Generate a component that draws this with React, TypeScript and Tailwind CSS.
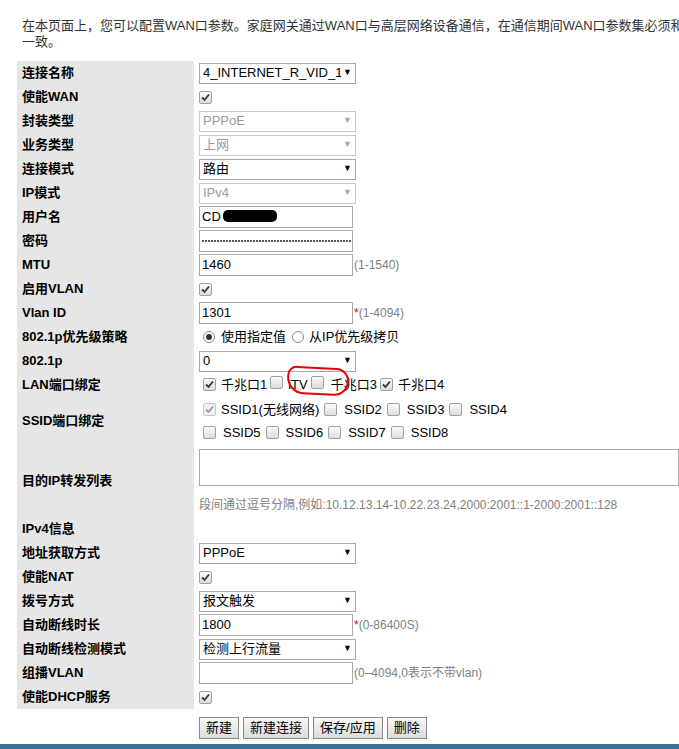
import React from "react";

const Chk = ({ on, dis }: { on?: boolean; dis?: boolean }) => (
  <span className={`inline-flex items-center justify-center w-[13px] h-[13px] border rounded-[2px] ${dis ? "border-[#c8c8c8] bg-[#f2f2f2]" : "border-[#a0a0a0] bg-gradient-to-b from-[#fafafa] to-[#dcdcdc]"}`}>
    {on && (
      <svg width="9" height="9" viewBox="0 0 9 9"><path d="M1 4.5 L3.5 7 L8 1.5" stroke={dis ? "#9a9a9a" : "#333"} strokeWidth="1.8" fill="none" /></svg>
    )}
  </span>
);

const Sel = ({ v, dis, w = "w-[157px]" }: { v: string; dis?: boolean; w?: string }) => (
  <div className={`${w} h-[21px] border ${dis ? "border-[#c8c8c8] text-[#9a9a9a]" : "border-[#a9a9a9] text-black"} bg-white flex items-center justify-between px-[3px] text-[13px] overflow-hidden whitespace-nowrap`}>
    <span className="overflow-hidden flex-1 min-w-0">{v}</span>
    <span className={`text-[9px] ml-[2px] ${dis ? "text-[#aaa]" : "text-black"}`}>▼</span>
  </div>
);

const Inp = ({ v, pw }: { v: string; pw?: boolean }) => (
  <div className="w-[154px] h-[22px] border border-[#a9a9a9] bg-white flex items-center px-[2px] text-[13px] overflow-hidden whitespace-nowrap">
    {pw ? (
      <span className="flex gap-[1px]">
        {Array.from({ length: 50 }).map((_, i) => (
          <span key={i} className="w-[2px] h-[2px] rounded-full bg-[#222]" />
        ))}
      </span>
    ) : v}
  </div>
);

const Hint = ({ t, star }: { t: string; star?: boolean }) => (
  <span className="text-[12px] text-[#808080] ml-[1px]">{star && <span className="text-red-600">*</span>}{t}</span>
);

type Row = { l: string; h?: number; c: React.ReactNode };

export default function App() {
  const rows: Row[] = [
    { l: "连接名称", c: <Sel v="4_INTERNET_R_VID_13" /> },
    { l: "使能WAN", c: <Chk on /> },
    { l: "封装类型", c: <Sel v="PPPoE" dis /> },
    { l: "业务类型", c: <Sel v="上网" dis /> },
    { l: "连接模式", c: <Sel v="路由" /> },
    { l: "IP模式", c: <Sel v="IPv4" dis /> },
    { l: "用户名", c: <div className="relative"><Inp v="CD" /><div className="absolute left-[24px] top-[4px] w-[54px] h-[12px] bg-black rounded-[5px]" /></div> },
    { l: "密码", c: <Inp v="" pw /> },
    { l: "MTU", c: <><Inp v="1460" /><Hint t="(1-1540)" /></> },
    { l: "启用VLAN", c: <Chk on /> },
    { l: "Vlan ID", c: <><Inp v="1301" /><Hint t="(1-4094)" star /></> },
    { l: "802.1p优先级策略", c: <span className="flex items-center gap-[3px] text-[13px]"><span className="w-[12px] h-[12px] rounded-full border border-[#888] bg-white flex items-center justify-center ml-[4px]"><span className="w-[6px] h-[6px] rounded-full bg-[#333]" /></span><span className="ml-[3px]">使用指定值</span><span className="w-[12px] h-[12px] rounded-full border border-[#888] bg-white ml-[3px]" /><span className="ml-[2px]">从IP优先级拷贝</span></span> },
    { l: "802.1p", c: <Sel v="0" /> },
    { l: "LAN端口绑定", c: (
      <span className="flex items-center text-[13px] relative">
        <span className="ml-[4px]"><Chk on /></span><span className="ml-[5px]">千兆口1</span>
        <span className="ml-[3px]"><Chk /></span><span className="ml-[5px]">iTV</span>
        <span className="ml-[3px]"><Chk /></span><span className="ml-[7px]">千兆口3</span>
        <span className="ml-[3px]"><Chk on /></span><span className="ml-[5px]">千兆口4</span>
        <span className="absolute left-[88px] top-[-8px] w-[62px] h-[28px] border-[2px] border-red-600 rounded-[10px_14px_16px_18px] rotate-[3deg]" />
      </span>
    ) },
    { l: "SSID端口绑定", h: 48, c: (
      <div className="flex flex-col text-[13px] gap-[4px]">
        <span className="flex items-center gap-[5px] ml-[4px]"><Chk on dis /><span>SSID1(无线网络)</span><Chk /><span className="ml-[2px]">SSID2</span><Chk /><span className="ml-[2px]">SSID3</span><Chk /><span className="ml-[2px]">SSID4</span></span>
        <span className="flex items-center gap-[5px] ml-[4px]"><Chk /><span className="ml-[2px]">SSID5</span><Chk /><span className="ml-[2px]">SSID6</span><Chk /><span className="ml-[2px]">SSID7</span><Chk /><span className="ml-[2px]">SSID8</span></span>
      </div>
    ) },
    { l: "目的IP转发列表", h: 72, c: (
      <div className="flex flex-col w-full">
        <div className="w-[480px] h-[37px] border border-[#a9a9a9] bg-white mt-[4px]" />
        <div className="text-[12px] text-[#808080] mt-[10px] whitespace-nowrap">段间通过逗号分隔,例如:10.12.13.14-10.22.23.24,2000:2001::1-2000:2001::128</div>
      </div>
    ) },
    { l: "IPv4信息", c: null },
    { l: "地址获取方式", c: <Sel v="PPPoE" /> },
    { l: "使能NAT", c: <Chk on /> },
    { l: "拨号方式", c: <Sel v="报文触发" /> },
    { l: "自动断线时长", c: <><Inp v="1800" /><Hint t="(0-86400S)" star /></> },
    { l: "自动断线检测模式", c: <Sel v="检测上行流量" /> },
    { l: "组播VLAN", c: <><Inp v="" /><Hint t="(0–4094,0表示不带vlan)" /></> },
    { l: "使能DHCP服务", c: <Chk on /> },
  ];
  return (
    <div className="w-[679px] h-[749px] bg-white overflow-hidden relative" style={{ fontFamily: "Arial, 'Liberation Sans', 'Noto Sans CJK SC', sans-serif" }}>
      <p className="ml-[22px] pt-[18px] w-[720px] text-[13px] leading-[16px] text-[#333]">
        在本页面上，您可以配置WAN口参数。家庭网关通过WAN口与高层网络设备通信，在通信期间WAN口参数集必须和高层设备一致。
      </p>
      <div className="mt-[11px] ml-[17px]">
        {rows.map((r, i) => (
          <div key={i} className="flex" style={{ height: r.h ?? 24 }}>
            <div className="w-[177px] bg-[#e6e6e6] flex items-center pl-[5px] text-[13px] font-bold text-black whitespace-nowrap">{r.l}</div>
            <div className={`flex ${r.h === 72 ? "items-start" : "items-center"} pl-[5px]`}>{r.c}</div>
          </div>
        ))}
        <div className="flex gap-[4px] ml-[182px] mt-[8px] pb-[10px]">
          {["新建", "新建连接", "保存/应用", "删除"].map((b) => (
            <div key={b} className="h-[22px] px-[6px] border border-[#888] bg-gradient-to-b from-[#f8f8f8] to-[#dcdcdc] text-[13px] flex items-center">{b}</div>
          ))}
        </div>
      </div>
      <div className="absolute left-0 bottom-0 w-full h-[5px] bg-[#3b7091]" />
    </div>
  );
}
